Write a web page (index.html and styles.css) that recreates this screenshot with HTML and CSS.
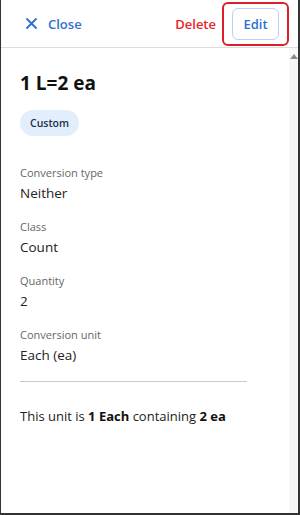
FILE: index.html
```html
<!DOCTYPE html>
<html lang="en">
<head>
    <meta charset="UTF-8">
    <meta name="viewport" content="width=device-width, initial-scale=1.0">
    <title>Unit conversion</title>
    <link rel="stylesheet" href="styles.css">
</head>
<body>
    <div class="panel">
        <header class="panel-header">
            <button class="close-button">
                <svg width="11" height="11" viewBox="0 0 11 11"><path d="M1 1 L10 10 M10 1 L1 10" stroke="#2f6fd0" stroke-width="1.8" stroke-linecap="round"/></svg>
                <span>Close</span>
            </button>
            <div class="header-actions">
                <button class="delete-button">Delete</button>
                <span class="highlight">
                    <button class="edit-button">Edit</button>
                </span>
            </div>
        </header>

        <div class="panel-body">
            <main class="details">
                <h1 class="unit-title">1 L=2 ea</h1>
                <span class="tag">Custom</span>

                <dl class="fields">
                    <div class="field">
                        <dt>Conversion type</dt>
                        <dd>Neither</dd>
                    </div>
                    <div class="field">
                        <dt>Class</dt>
                        <dd>Count</dd>
                    </div>
                    <div class="field">
                        <dt>Quantity</dt>
                        <dd>2</dd>
                    </div>
                    <div class="field">
                        <dt>Conversion unit</dt>
                        <dd>Each (ea)</dd>
                    </div>
                </dl>

                <hr class="divider">

                <p class="summary">This unit is <b>1 Each</b> containing <b>2 ea</b></p>
            </main>
            <div class="scrollbar">
                <span class="scroll-arrow"></span>
            </div>
        </div>
    </div>
</body>
</html>
```

FILE: styles.css
```css
/* --- Base --- */
body {
    margin: 0;
    font-family: 'Open Sans', 'Noto Sans', sans-serif;
    background-color: #ffffff;
    color: #222222;
}

button {
    font-family: inherit;
    background: none;
    border: none;
    padding: 0;
    cursor: pointer;
}

.panel {
    width: 300px;
    height: 515px;
    box-sizing: border-box;
    border: 1px solid #333333;
    border-top: none;
    border-right-width: 2px;
    border-bottom-width: 2px;
    display: flex;
    flex-direction: column;
    overflow: hidden;
}

/* --- Header --- */
.panel-header {
    height: 48px;
    box-sizing: border-box;
    border-bottom: 1px solid #dddddd;
    display: flex;
    align-items: center;
    justify-content: space-between;
    padding: 0 9px 0 25px;
}

.close-button {
    display: flex;
    align-items: center;
    gap: 11px;
    color: #2f6fd0;
    font-size: 13px;
    font-weight: 600;
}

.header-actions {
    display: flex;
    align-items: center;
    gap: 6px;
}

.delete-button {
    color: #e8232b;
    font-size: 13px;
    font-weight: 600;
}

.highlight {
    display: block;
    padding: 4px 8px;
    border: 2px solid #e01e2a; /* red callout around Edit */
    border-radius: 6px;
}

.edit-button {
    display: block;
    width: 47px;
    height: 32px;
    box-sizing: border-box;
    border: 1.5px solid #b8d2f0;
    border-radius: 6px;
    color: #2f6fd0;
    font-size: 13px;
    font-weight: 600;
}

/* --- Body --- */
.panel-body {
    flex: 1;
    display: flex;
    min-height: 0;
}

.details {
    flex: 1;
    padding: 0 42px 0 19px;
}

.unit-title {
    font-size: 19px;
    font-weight: 700;
    color: #111111;
    margin: 22px 0 14px;
    line-height: 26px;
}

.tag {
    display: inline-block;
    background-color: #e2eefb;
    color: #1c2f4a;
    font-size: 10.5px;
    font-weight: 600;
    padding: 5px 10px;
    border-radius: 13px;
    line-height: 16px;
}

.fields {
    margin: 29px 0 0;
}

.field {
    margin-bottom: 16px;
}

.field dt {
    font-size: 11px;
    color: #666666;
    line-height: 15px;
}

.field dd {
    margin: 4px 0 0;
    font-size: 13.5px;
    color: #222222;
    line-height: 19px;
}

.divider {
    border: none;
    border-top: 1px solid #c8c8c8;
    margin: 3px 0 0;
}

.summary {
    margin: 25px 0 0;
    font-size: 13px;
    color: #222222;
}

.summary b {
    font-weight: 700;
    color: #111111;
}

/* --- Fake scrollbar --- */
.scrollbar {
    width: 9px;
    background-color: #f7f7f7;
    display: flex;
    justify-content: center;
    padding-top: 6px;
}

.scroll-arrow {
    width: 0;
    height: 0;
    border-left: 4px solid transparent;
    border-right: 4px solid transparent;
    border-bottom: 5px solid #8a8a8a;
}
```
